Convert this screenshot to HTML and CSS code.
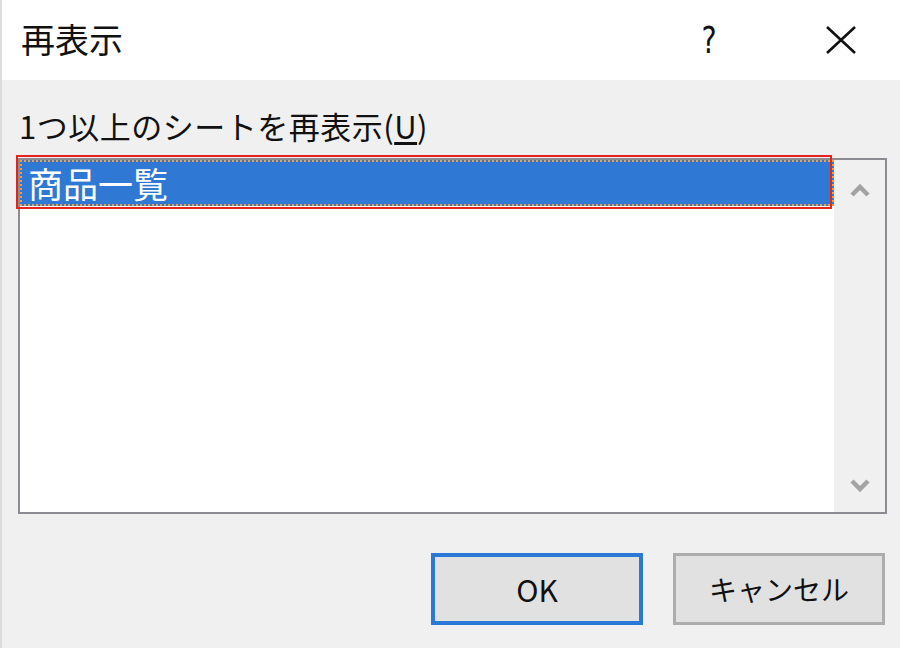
FILE: index.html
```html
<!DOCTYPE html>
<html lang="ja">
<head>
<meta charset="utf-8">
<title>再表示</title>
<link rel="stylesheet" href="styles.css">
</head>
<body>
<div class="dialog">
  <div class="titlebar">
    <span class="title">再表示</span>
    <span class="help">?</span>
    <svg class="close" width="32" height="30" viewBox="0 0 32 30"><path d="M2 2 L30 28 M30 2 L2 28" stroke="#111" stroke-width="2.6" fill="none"/></svg>
  </div>
  <div class="content">
    <div class="label">1つ以上のシートを再表示(<u>U</u>)</div>
    <div class="listbox">
      <div class="items">
        <div class="item selected">商品一覧</div>
      </div>
      <div class="scrollbar">
        <svg width="22" height="16" viewBox="0 0 22 16"><path d="M3 13 L11 5 L19 13" stroke="#a3a3a3" stroke-width="4.5" fill="none"/></svg>
        <svg width="22" height="16" viewBox="0 0 22 16"><path d="M3 3 L11 11 L19 3" stroke="#a3a3a3" stroke-width="4.5" fill="none"/></svg>
      </div>
    </div>
    <div class="buttons">
      <button class="btn default">OK</button>
      <button class="btn">キャンセル</button>
    </div>
  </div>
</div>
</body>
</html>
```
FILE: styles.css
```css
html, body {
  margin: 0;
  padding: 0;
}
body {
  width: 900px;
  height: 648px;
  overflow: hidden;
  background: #f0f0f0;
  font-family: "Noto Sans CJK JP", "Noto Sans", sans-serif;
  color: #111;
}
.dialog {
  box-sizing: border-box;
  width: 900px;
  height: 648px;
  border-left: 2px solid #dcdcdc;
  display: flex;
  flex-direction: column;
}
.titlebar {
  height: 80px;
  background: #fff;
  display: flex;
  align-items: center;
  padding-left: 19px;
}
.title {
  font-size: 34px;
  line-height: 40px;
  margin-top: -2px;
}
.help {
  margin-left: auto;
  font-size: 38px;
  line-height: 40px;
  margin-right: 106px;
  font-family: "DejaVu Sans", sans-serif;
  margin-top: -1px;
  transform: scaleX(0.75);
}
.close {
  margin-right: 43px;
  margin-top: -1px;
}
.content {
  flex: 1;
  padding: 28px 13px 0 16px;
  display: flex;
  flex-direction: column;
}
.label {
  font-size: 31px;
  line-height: 36px;
  height: 36px;
  margin-left: 1px;
  letter-spacing: 0.5px;
  white-space: nowrap;
}
.label u {
  text-underline-offset: 3px;
}
.listbox {
  margin-top: 14px;
  height: 356px;
  box-sizing: border-box;
  border: 2px solid #8a8c91;
  background: #fff;
  display: flex;
}
.items {
  flex: 1;
  position: relative;
}
.item {
  position: relative;
  height: 46px;
  box-sizing: border-box;
  padding-left: 6px;
  font-size: 35px;
  line-height: 42px;
  white-space: nowrap;
}
.item.selected {
  background: #2f78d4;
  color: #fff;
  border: 2px dotted #f0a040;
}
.item.selected::after {
  content: "";
  position: absolute;
  left: -6px;
  right: 0px;
  top: -7px;
  bottom: -5px;
  border: 2px solid #e5231c;
}
.scrollbar {
  width: 51px;
  background: #f0f0f0;
  display: flex;
  flex-direction: column;
  justify-content: space-between;
  align-items: center;
  padding: 22px 0 18px;
  box-sizing: border-box;
}
.buttons {
  margin-top: 39px;
  margin-right: 2px;
  display: flex;
  justify-content: flex-end;
  gap: 30px;
}
.btn {
  box-sizing: border-box;
  width: 212px;
  height: 72px;
  background: #e1e1e1;
  border: 3px solid #adadad;
  font-family: "Noto Sans CJK JP", "Noto Sans", sans-serif;
  font-size: 28px;
  color: #111;
  padding: 0;
}
.btn.default {
  border: 4px solid #2b79d7;
  font-size: 30px;
}
```
